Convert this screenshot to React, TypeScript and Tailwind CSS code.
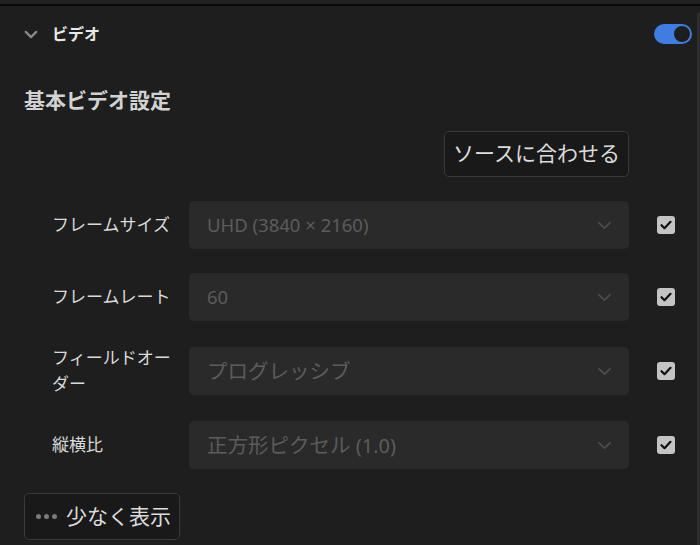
import React from "react";

const FONT = { fontFamily: '"Noto Sans", "Noto Sans CJK JP", sans-serif' };

function Chevron({ className, sw = 2 }: { className?: string; sw?: number }) {
  return (
    <svg viewBox="0 0 16 10" className={className} fill="none" stroke="currentColor" strokeWidth={sw} strokeLinecap="round" strokeLinejoin="round">
      <path d="M2 2l6 6 6-6" />
    </svg>
  );
}

function Check() {
  return (
    <div className="w-[18px] h-[18px] rounded-[3px] bg-[#c4c4c4] flex items-center justify-center">
      <svg viewBox="0 0 12 10" className="w-[12px] h-[10px]" fill="none" stroke="#111" strokeWidth={2.2} strokeLinecap="round" strokeLinejoin="round">
        <path d="M1.5 5.2l3 3L10.5 1.8" />
      </svg>
    </div>
  );
}

function Row({ label, cjk, latin, latinSize = "text-[18.5px]" }: { label: string; cjk?: string; latin?: string; latinSize?: string }) {
  return (
    <div className="flex items-center">
      <div className="w-[165px] pl-[28px] pr-[9px] text-[17px] leading-[26px] text-[#dadada]">{label}</div>
      <div className="w-[440px] h-[48px] rounded-[5px] bg-[#2a2a2a] flex items-center justify-between pl-[18px] pr-[17px]">
        <span className="text-[#5c5c5c] whitespace-pre">
          {cjk && <span className="text-[20.5px]">{cjk}</span>}
          {latin && <span className={latinSize}>{latin}</span>}
        </span>
        <Chevron className="w-[15px] h-[9px] text-[#4d4d4d]" />
      </div>
      <div className="ml-[28px]">
        <Check />
      </div>
    </div>
  );
}

export default function App() {
  return (
    <div className="w-[700px] h-[545px] bg-[#1e1e1e] relative overflow-hidden" style={FONT}>
      <div className="h-[4px] bg-[#212121]" />
      <div className="h-[2px] bg-[#080808]" />
      <div className="absolute right-0 top-[13px] bottom-0 w-[3px] bg-[#2c2c2c]" />
      <div className="pl-[24px] pr-[8px]">
        <div className="mt-[8px] h-[40px] flex items-center justify-between">
          <div className="flex items-center">
            <Chevron className="w-[14px] h-[9px] text-[#8a8a8a]" sw={2.6} />
            <span className="ml-[14px] text-[16px] font-bold text-[#e8e8e8]">ビデオ</span>
          </div>
          <div className="w-[38px] h-[20px] rounded-full bg-[#3f7de3] flex items-center justify-end pr-[2px]">
            <div className="w-[16px] h-[16px] rounded-full bg-[#1e1e1e]" />
          </div>
        </div>
        <div className="mt-[32px] text-[21px] leading-[28px] font-bold text-[#d2d2d2]">基本ビデオ設定</div>
        <div className="mt-[17px] flex w-[605px] justify-end">
          <button className="h-[46px] w-[185px] rounded-[5px] border border-[#3a3a3a] bg-[#191919] text-[21px] text-[#dcdcdc] flex items-center justify-center">
            ソースに合わせる
          </button>
        </div>
        <div className="mt-[24px] flex flex-col gap-[24px]">
          <Row label="フレームサイズ" latin="UHD (3840 × 2160)" />
          <Row label="フレームレート" latin="60" />
          <Row label="フィールドオーダー" cjk="プログレッシブ" />
          <Row label="縦横比" cjk="正方形ピクセル" latin=" (1.0)" latinSize="text-[20px]" />
        </div>
        <button className="mt-[24px] h-[47px] w-[156px] rounded-[5px] border border-[#3a3a3a] bg-[#191919] flex items-center pl-[11px]">
          <span className="flex gap-[3px] mr-[9px]">
            <span className="w-[5px] h-[5px] rounded-full bg-[#7a7a7a]" />
            <span className="w-[5px] h-[5px] rounded-full bg-[#7a7a7a]" />
            <span className="w-[5px] h-[5px] rounded-full bg-[#7a7a7a]" />
          </span>
          <span className="text-[21px] text-[#dcdcdc]">少なく表示</span>
        </button>
      </div>
    </div>
  );
}
